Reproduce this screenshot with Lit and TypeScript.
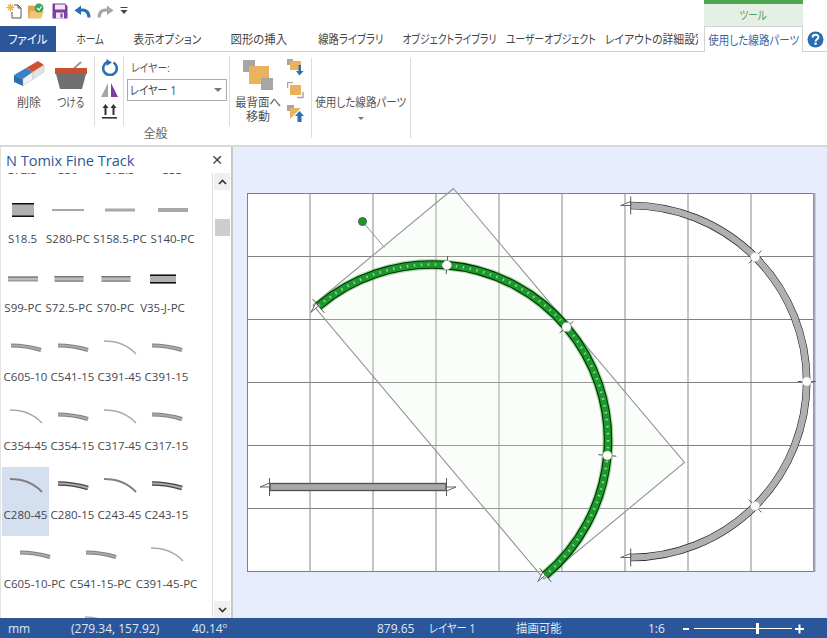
import { LitElement, html, css, svg } from "lit";
import { customElement } from "lit/decorators.js";

type Item = { label: string; width: number; kind: string; w?: number; h?: number; dark?: number };

const c45 = (label: string, dark = 0): Item => ({ label, width: 47, kind: "c45", dark });
const c15 = (label: string, dark = 0): Item => ({ label, width: 47, kind: "c15", dark });

const ROWS: Item[][] = [
  [
    { label: "S72.5", width: 41, kind: "none" },
    { label: "S50", width: 50, kind: "none" },
    { label: "S72.5", width: 54, kind: "none" },
    { label: "S33", width: 51, kind: "none" },
  ],
  [
    { label: "S18.5", width: 41, kind: "wide", w: 22, h: 14 },
    { label: "S280-PC", width: 50, kind: "thin", w: 32, h: 2 },
    { label: "S158.5-PC", width: 54, kind: "thin", w: 30, h: 3 },
    { label: "S140-PC", width: 51, kind: "thin", w: 30, h: 4 },
  ],
  [
    { label: "S99-PC", width: 42, kind: "double", w: 30, h: 5 },
    { label: "S72.5-PC", width: 50, kind: "double", w: 29, h: 6 },
    { label: "S70-PC", width: 43, kind: "double", w: 29, h: 6 },
    { label: "V35-J-PC", width: 51, kind: "wide", w: 26, h: 9 },
  ],
  [c15("C605-10"), c15("C541-15"), c45("C391-45"), c15("C391-15")],
  [c45("C354-45"), c15("C354-15"), c45("C317-45"), c15("C317-15")],
  [c45("C280-45", 1), c15("C280-15", 1), c45("C243-45", 1), c15("C243-15", 1)],
  [
    { label: "C605-10-PC", width: 65, kind: "c15", dark: 0 },
    { label: "C541-15-PC", width: 67, kind: "c15", dark: 0 },
    { label: "C391-45-PC", width: 65, kind: "c45", dark: 0 },
  ],
  [
    { label: "", width: 65, kind: "none" },
    { label: "", width: 67, kind: "c45", dark: 0 },
    { label: "", width: 65, kind: "none" },
  ],
];

const pt = (cx: number, cy: number, r: number, deg: number) => {
  const a = (deg * Math.PI) / 180;
  return [cx + r * Math.sin(a), cy - r * Math.cos(a)];
};

const arcD = (cx: number, cy: number, r: number, a0: number, a1: number) => {
  const [x0, y0] = pt(cx, cy, r, a0);
  const [x1, y1] = pt(cx, cy, r, a1);
  return `M${x0.toFixed(2)} ${y0.toFixed(2)}A${r} ${r} 0 ${a1 - a0 > 180 ? 1 : 0} 1 ${x1.toFixed(2)} ${y1.toFixed(2)}`;
};

const radial = (cx: number, cy: number, r: number, deg: number, len: number) => {
  const [x0, y0] = pt(cx, cy, r - len, deg);
  const [x1, y1] = pt(cx, cy, r + len, deg);
  return svg`<line class="tick" x1=${x0} y1=${y0} x2=${x1} y2=${y1}></line>`;
};

const endMark = (cx: number, cy: number, r: number, deg: number, dir: number) => {
  const [x, y] = pt(cx, cy, r, deg);
  const a = (deg * Math.PI) / 180;
  const tx = Math.cos(a) * dir;
  const ty = Math.sin(a) * dir;
  const nx = Math.sin(a);
  const ny = -Math.cos(a);
  const o = dir < 0 ? 1 : -1;
  const tipX = x + tx * 10;
  const tipY = y + ty * 10;
  const sx = x + nx * 4 * o;
  const sy = y + ny * 4 * o;
  return svg`<polygon class="mark" points="${x},${y} ${tipX},${tipY} ${sx},${sy}"></polygon>${radial(cx, cy, r, deg, 9)}`;
};

const node = (cx: number, cy: number, r: number, deg: number) => {
  const [x, y] = pt(cx, cy, r, deg);
  return svg`${radial(cx, cy, r, deg, 9)}<circle class="node" cx=${x} cy=${y} r="4.5"></circle>`;
};

@customElement("app-root")
export class AppRoot extends LitElement {
  static styles = css`
    :host {
      display: flex;
      flex-direction: column;
      width: 827px;
      height: 638px;
      overflow: hidden;
      background: #fff;
      font-family: "Open Sans", "Noto Sans CJK JP", sans-serif;
      font-feature-settings: "palt";
      font-size: 11.5px;
      color: #444;
    }
    svg { display: block; }
    .c { display: inline-block; white-space: nowrap; flex: none; }
    .s80 { transform: scaleX(0.8); }
    .s82 { transform: scaleX(0.82); }
    .s86 { transform: scaleX(0.86); }
    .s88 { transform: scaleX(0.88); }
    .s90 { transform: scaleX(0.9); }
    .s95 { transform: scaleX(0.95); }
    .l { transform-origin: left center; }
    .top { display: flex; height: 26px; align-items: flex-start; }
    .qa { display: flex; align-items: center; height: 22px; padding-left: 6px; gap: 6px; }
    .qa .save { margin-left: 1px; }
    .tool {
      margin-left: auto; margin-right: 24px; width: 99px; height: 26px; box-sizing: border-box;
      border-top: 4px solid #4ea64e; background: #e3f0e3; color: #5a9a5a;
      display: flex; align-items: center; justify-content: center; font-size: 12px;
    }
    .tabs {
      display: grid;
      grid-template-columns: 56px 69px 84px 100px 83px 114px 89px 109px 99px 24px;
      height: 26px; box-sizing: border-box; border-bottom: 1px solid #d2d2d2;
    }
    .tab { display: flex; align-items: center; justify-content: center; white-space: nowrap; font-size: 12px; color: #444; min-width: 0; }
    .tab.file { background: #2b579a; color: #fff; }
    .tab.clip { justify-content: flex-start; padding-left: 10px; margin-right: 6px; overflow: hidden; }
    .tab.on {
      background: #fff; color: #3a63a0; border: 1px solid #d2d2d2; border-bottom: 0; height: 26px; box-sizing: border-box;
    }
    .tab.help { padding-left: 1px; }
    .ribbon { display: flex; height: 95px; box-sizing: border-box; border-bottom: 2px solid #d8d8d8; }
    .group { display: flex; flex-direction: column; margin-top: 4px; }
    .g1 { width: 311px; }
    .g2 { width: 98px; }
    .gbody { display: flex; height: 70px; }
    .g1 .gbody { padding-left: 8px; }
    .glabel { text-align: center; line-height: 14px; margin-top: 1px; color: #666; font-size: 12px; }
    .sep { width: 1px; height: 70px; background: #dcdcdc; flex: none; }
    .gsep { width: 1px; height: 80px; margin-top: 6px; background: #dcdcdc; flex: none; }
    .big {
      width: 42px; display: flex; flex-direction: column; align-items: center; padding-top: 4px; box-sizing: border-box;
      font-size: 12px; line-height: 14px; color: #555; text-align: center; white-space: nowrap; flex: none;
    }
    .big .ic { height: 32px; margin-bottom: 4px; }
    .gap2 { width: 2px; flex: none; }
    .smallcol { width: 28px; display: flex; flex-direction: column; align-items: center; padding-top: 3px; gap: 7px; box-sizing: border-box; flex: none; }
    .layer { width: 105px; padding-left: 3px; box-sizing: border-box; flex: none; }
    .layer .cap { line-height: 14px; margin: 5px 0 4px 4px; font-size: 11.5px; color: #555; }
    .combo {
      width: 100px; height: 22px; box-sizing: border-box; border: 1px solid #ababab; display: flex; align-items: center;
      padding: 0 4px 0 2px; justify-content: space-between; font-size: 12px; color: #444;
    }
    .tri { width: 0; height: 0; border-left: 4px solid transparent; border-right: 4px solid transparent; border-top: 4px solid #777; }
    .tri.mini { border-left-width: 3px; border-right-width: 3px; border-top-width: 3px; margin-top: 7px; }
    .big.front { width: 56px; }
    .smallcol.order { width: 18px; margin-right: 7px; gap: 6px; }
    .big.parts { width: 98px; padding-top: 40px; }
    .main { display: flex; height: 471px; }
    .panel { width: 233px; height: 471px; flex: none; box-sizing: border-box; border-left: 1px solid #e2e2e2; border-right: 2px solid #c8c8c8; display: flex; flex-direction: column; background: #fff; }
    .phead { height: 26px; flex: none; display: flex; align-items: center; justify-content: space-between; padding: 0 8px 0 5px; }
    .ptitle { font-size: 14.5px; color: #2b579a; white-space: nowrap; }
    .px { font-size: 14px; color: #444; line-height: 1; font-family: "DejaVu Sans", sans-serif; }
    .pbody { flex: 1; display: flex; min-height: 0; }
    .list { width: 211px; flex: none; overflow: hidden; padding-left: 1px; box-sizing: border-box; }
    .rows { margin-top: -51px; }
    .row { display: flex; height: 69px; }
    .cell { height: 69px; display: flex; flex-direction: column; align-items: center; flex: none; box-sizing: border-box; }
    .cell.sel { background: #d4dff0; }
    .cell svg { flex: none; }
    .lab { margin-top: 2px; line-height: 16px; white-space: nowrap; color: #44474f; font-size: 11.5px; }
    .sb { width: 18px; flex: none; border-left: 1px solid #dedede; box-sizing: content-box; display: flex; flex-direction: column; align-items: center; }
    .sbtn { width: 16px; height: 17px; background: #f0f0f0; display: flex; align-items: center; justify-content: center; flex: none; }
    .thumb { width: 15px; height: 17px; background: #cdcdcd; margin-top: 29px; flex: none; }
    .sbfill { flex: 1; }
    .canvas { flex: 1; background: #e8edfd; min-width: 0; }
    .status {
      height: 20px; background: #2b579a; color: #dfe7f3; display: grid; align-items: center; flex: none; font-size: 12px;
      grid-template-columns: 71px 121px 185px 52px 87px 132px 35px 144px;
    }
    .status > span { white-space: nowrap; }
    .status .mm { padding-left: 8px; }
    sup { font-size: 8px; line-height: 0; }

    .grid-v { stroke: #c4c4c4; stroke-width: 2; }
    .grid-h { stroke: #808080; stroke-width: 1; }
    .edge { fill: none; stroke: #808080; stroke-width: 1; }
    .bbox { fill: rgba(232, 244, 232, 0.22); stroke: #8f958f; stroke-width: 1.1; }
    .tick { stroke: #555; stroke-width: 1; }
    .mark { fill: #fff; stroke: #666; stroke-width: 1; }
    .node { fill: #fff; stroke: #bbb; stroke-width: 0.5; }
    .halo { fill: none; stroke: #5cb85c; stroke-opacity: 0.5; stroke-width: 11; }
    .gout { fill: none; stroke: #002f00; stroke-width: 8.6; }
    .gin { fill: none; stroke: #1a9a2a; stroke-width: 6.4; }
    .gdash { fill: none; stroke: #a9c6a9; stroke-width: 2.6; stroke-dasharray: 1.5 5.5; }
    .tout { fill: none; stroke: #222; stroke-width: 7.6; }
    .tin { fill: none; stroke: #b0b0b0; stroke-width: 6.4; }
    .rail { fill: #a9a9a9; stroke: #555; stroke-width: 1.4; }
    .hline { stroke: #8f958f; stroke-width: 1; }
    .handle { fill: #1a9a2a; stroke: #555; stroke-width: 1; }
    .zoomsvg { display: block; }
  `;

  private itemIcon(it: Item) {
    let body: unknown = null;
    if (it.kind === "wide") {
      const w = it.w!, h = it.h!, x = 22 - w / 2, y = 19 - h / 2;
      body = svg`<rect x=${x} y=${y} width=${w} height=${h} fill="#b0b0b0"></rect>
        <rect x=${x} y=${y} width=${w} height="1.5" fill="#111"></rect>
        <rect x=${x} y=${y + h - 1.5} width=${w} height="1.5" fill="#111"></rect>`;
    } else if (it.kind === "thin") {
      const w = it.w!, h = it.h!;
      body = svg`<rect x=${22 - w / 2} y=${19 - h / 2} width=${w} height=${h} fill="#a8a8a8"></rect>`;
    } else if (it.kind === "double") {
      const w = it.w!, h = it.h!, x = 22 - w / 2, y = 19 - h / 2;
      body = svg`<rect x=${x} y=${y} width=${w} height=${h} fill="#9a9a9a"></rect>
        <rect x=${x} y=${19 - 0.5} width=${w} height="1" fill="#dcdcdc"></rect>
        <rect x=${x} y=${y} width=${w} height="1" fill="#777"></rect>`;
    } else if (it.kind === "c45") {
      body = svg`<path d="M6 12Q26 12 38 25" fill="none" stroke=${it.dark ? "#808080" : "#aaa"} stroke-width=${it.dark ? 2 : 1.5}></path>`;
    } else if (it.kind === "c15") {
      body = svg`<path d="M7 16.5Q22 16.5 37 21" fill="none" stroke=${it.dark ? "#444" : "#808080"} stroke-width=${it.dark ? 4.6 : 4}></path>
        <path d="M7 16.5Q22 16.5 37 21" fill="none" stroke="#aaa" stroke-width="2.2"></path>`;
    }
    return html`<svg width="44" height="38" viewBox="0 0 44 38">${body}</svg>`;
  }

  private canvasSvg() {
    const xs = [310, 373, 436, 499, 562, 625, 688, 751];
    const ys = [256, 319, 382, 445, 508];
    const gc = [432, 440.5, 176] as const;
    const ga = [-40.14, 4.86, 49.86, 94.86, 139.86];
    const tc = [630.7, 381.5, 176] as const;
    const d1 = arcD(gc[0], gc[1], gc[2], ga[0], ga[4]);
    const d2 = arcD(tc[0], tc[1], tc[2], 0, 180);
    return html`<svg width="594" height="471" viewBox="233 147 594 471">
      <rect x="247" y="193" width="567" height="378" fill="#fff"></rect>
      ${xs.map((x) => svg`<line class="grid-v" x1=${x} y1="193" x2=${x} y2="571"></line>`)}
      ${ys.map((y) => svg`<line class="grid-h" x1="247" y1=${y + 0.5} x2="814" y2=${y + 0.5}></line>`)}
      <rect class="edge" x="247.5" y="193.5" width="566" height="378"></rect>
      <line x1="814.5" y1="193" x2="814.5" y2="572" stroke="#a8a8b8" stroke-width="2"></line>
      <polygon class="bbox" points="453.5,188.5 684.5,462.5 544,579 313,305"></polygon>
      <line class="hline" x1="362.5" y1="221.5" x2="384.5" y2="247.5"></line>
      <circle class="handle" cx="362.5" cy="221.5" r="4"></circle>

      <rect class="rail" x="270" y="483.5" width="176" height="7"></rect>
      <line class="tick" x1="269.5" y1="478" x2="269.5" y2="496"></line>
      <line class="tick" x1="446.5" y1="478" x2="446.5" y2="496"></line>
      <polygon class="mark" points="269.5,483 260,487 269.5,487"></polygon>
      <polygon class="mark" points="446.5,487 456,487 446.5,491"></polygon>

      <path class="tout" d=${d2}></path>
      <path class="tin" d=${d2}></path>
      ${endMark(tc[0], tc[1], tc[2], 0, -1)}
      ${endMark(tc[0], tc[1], tc[2], 180, 1)}
      ${[45, 90, 135].map((a) => node(tc[0], tc[1], tc[2], a))}

      <path class="halo" d=${d1}></path>
      <path class="gout" d=${d1}></path>
      <path class="gin" d=${d1}></path>
      <path class="gdash" d=${d1}></path>
      ${endMark(gc[0], gc[1], gc[2], ga[0], -1)}
      ${endMark(gc[0], gc[1], gc[2], ga[4], 1)}
      ${ga.slice(1, 4).map((a) => node(gc[0], gc[1], gc[2], a))}
    </svg>`;
  }

  render() {
    return html`
      <div class="top">
        <div class="qa">
          <svg width="16" height="16" viewBox="0 0 16 16">
            <path d="M8 2H12L15 5V15H6V9" fill="#fff" stroke="#555" stroke-width="1"></path>
            <path d="M12 2V5H15" fill="none" stroke="#555"></path>
            <path d="M4.5 0.5V8.5M0.5 4.5H8.5M1.8 1.8L7.2 7.2M7.2 1.8L1.8 7.2" stroke="#e8a33d" stroke-width="1.2"></path>
            <circle cx="4.5" cy="4.5" r="2" fill="#f0b840"></circle>
          </svg>
          <svg width="17" height="16" viewBox="0 0 17 16">
            <path d="M0.5 3H6L7.5 5H13V15H0.5Z" fill="#e0a84f" stroke="#c98f35" stroke-width="0.6"></path>
            <path d="M2.5 8H16L13 15H0.5Z" fill="#f2c671"></path>
            <circle cx="11" cy="5" r="4.5" fill="#3fa45a"></circle>
            <path d="M9 5L11 7L13.5 3.5" fill="none" stroke="#fff" stroke-width="1.2"></path>
          </svg>
          <svg class="save" width="16" height="16" viewBox="0 0 16 16">
            <path d="M0.5 0.5H13L15.5 3V15.5H0.5Z" fill="#7a3fa0"></path>
            <rect x="3" y="1.5" width="10" height="5" fill="#efe6f4"></rect>
            <rect x="4" y="9.5" width="8" height="6" fill="#efe6f4"></rect>
            <rect x="8.5" y="10.5" width="2" height="4" fill="#7a3fa0"></rect>
          </svg>
          <svg width="17" height="14" viewBox="0 0 17 14">
            <path d="M15 13.5C15 7 10 4.5 4.5 7" fill="none" stroke="#2a6db0" stroke-width="3"></path>
            <path d="M0.5 6.5L7 1.5V11Z" fill="#2a6db0"></path>
          </svg>
          <svg width="17" height="14" viewBox="0 0 17 14">
            <path d="M2 13.5C2 7 7 4.5 12.5 7" fill="none" stroke="#a6a6a6" stroke-width="3"></path>
            <path d="M16.5 6.5L10 1.5V11Z" fill="#a6a6a6"></path>
          </svg>
          <svg width="8" height="8" viewBox="0 0 8 8">
            <rect x="0.5" y="0" width="7" height="1" fill="#444"></rect>
            <path d="M0.5 3H7.5L4 7Z" fill="#444"></path>
          </svg>
        </div>
        <div class="tool"><span class="c s80">ツール</span></div>
      </div>

      <div class="tabs">
        <div class="tab file"><span class="c s95">ファイル</span></div>
        <div class="tab"><span class="c s80">ホーム</span></div>
        <div class="tab"><span class="c s88">表示オプション</span></div>
        <div class="tab"><span class="c s95">図形の挿入</span></div>
        <div class="tab"><span class="c s86">線路ライブラリ</span></div>
        <div class="tab"><span class="c s82">オブジェクトライブラリ</span></div>
        <div class="tab"><span class="c s82">ユーザーオブジェクト</span></div>
        <div class="tab clip"><span class="c s90 l">レイアウトの詳細設定</span></div>
        <div class="tab on"><span class="c s88">使用した線路パーツ</span></div>
        <div class="tab help">
          <svg width="17" height="17" viewBox="0 0 17 17">
            <circle cx="8.5" cy="8.5" r="8" fill="#2b6cb0"></circle>
            <path d="M5.6 6.4C5.6 2.8 11.4 2.8 11.4 6.2C11.4 8.2 8.6 8.2 8.6 10.4" fill="none" stroke="#fff" stroke-width="2"></path>
            <rect x="7.5" y="11.6" width="2.2" height="2.2" fill="#fff"></rect>
          </svg>
        </div>
      </div>

      <div class="ribbon">
        <div class="group g1">
          <div class="gbody">
            <div class="big">
              <div class="ic">
                <svg width="32" height="28" viewBox="0 0 32 28">
                  <path d="M1 15L10 19V26L1 22Z" fill="#2a6db0"></path>
                  <path d="M1 15L13 8L20 12L10 19Z" fill="#3b7fc4"></path>
                  <path d="M13 8L25 1L31 5L20 12Z" fill="#cf4f33"></path>
                  <path d="M10 19L20 12V19L10 26Z" fill="#f2f2f2" stroke="#bbb" stroke-width="0.5"></path>
                  <path d="M20 12L31 5V12L20 19Z" fill="#e3e3e3" stroke="#bbb" stroke-width="0.5"></path>
                </svg>
              </div>
              削除
            </div>
            <div class="big">
              <div class="ic">
                <svg width="32" height="30" viewBox="0 0 32 30">
                  <path d="M15 12L26 2" stroke="#999" stroke-width="2"></path>
                  <rect x="0" y="8" width="32" height="6" fill="#c94f33"></rect>
                  <path d="M1 14H31L27 29H5Z" fill="#6f6f6f"></path>
                </svg>
              </div>
              <span class="c s80">つける</span>
            </div>
            <div class="gap2"></div>
            <div class="sep"></div>
            <div class="smallcol">
              <svg width="18" height="17" viewBox="0 0 18 17">
                <path d="M7 3.2A6.8 6.8 0 1 0 13.5 3.5" fill="none" stroke="#2f6fb0" stroke-width="2.6"></path>
                <path d="M7.5 0V7L13 3.5Z" fill="#2f6fb0" transform="translate(-1 0)"></path>
              </svg>
              <svg width="17" height="14" viewBox="0 0 17 14">
                <path d="M7 0V14H0Z" fill="#a6a6a6"></path>
                <path d="M10 0V14H17Z" fill="#7a3fa0"></path>
              </svg>
              <svg width="15" height="15" viewBox="0 0 15 15">
                <path d="M3.5 0L6.5 4H4.5V11H2.5V4H0.5Z" fill="#333"></path>
                <path d="M11.5 0L14.5 4H12.5V11H10.5V4H8.5Z" fill="#333"></path>
                <rect x="0" y="13" width="15" height="1.6" fill="#333"></rect>
              </svg>
            </div>
            <div class="sep"></div>
            <div class="layer">
              <div class="cap"><span class="c s86 l">レイヤー:</span></div>
              <div class="combo"><span class="c s86 l">レイヤー 1</span><span class="tri"></span></div>
            </div>
            <div class="sep"></div>
            <div class="big front">
              <div class="ic">
                <svg width="30" height="30" viewBox="0 0 30 30">
                  <rect x="0" y="0" width="12" height="12" fill="#a6a6a6"></rect>
                  <rect x="6" y="6" width="20" height="18" fill="#e8b25f"></rect>
                  <rect x="18" y="18" width="12" height="12" fill="#a6a6a6"></rect>
                </svg>
              </div>
              <span class="c s95">最背面へ</span>
              <span>移動</span>
            </div>
            <div class="smallcol order">
              <svg width="17" height="17" viewBox="0 0 17 17">
                <rect x="0" y="0" width="6" height="6" fill="#a6a6a6"></rect>
                <rect x="3" y="2" width="11" height="9" fill="#e8b25f"></rect>
                <path d="M11.5 6V12H9L12.5 16.5L16.5 12H14V6Z" fill="#2f6fb0"></path>
              </svg>
              <svg width="17" height="17" viewBox="0 0 17 17">
                <path d="M0.5 6V0.5H6" fill="none" stroke="#a6a6a6" stroke-width="1.5"></path>
                <rect x="3" y="3" width="11" height="10" fill="#e8b25f"></rect>
                <path d="M16 10V15.5H10" fill="none" stroke="#a6a6a6" stroke-width="1.5"></path>
              </svg>
              <svg width="17" height="18" viewBox="0 0 17 18">
                <rect x="0" y="0" width="7" height="6" fill="#a6a6a6"></rect>
                <path d="M3 3H14L3 14Z" fill="#e8b25f"></path>
                <path d="M12.5 6L8 11H10.5V17H14.5V11H17Z" fill="#2f6fb0"></path>
              </svg>
            </div>
          </div>
          <div class="glabel">全般</div>
        </div>
        <div class="gsep"></div>
        <div class="group g2">
          <div class="gbody">
            <div class="big parts">
              <span class="c s88">使用した線路パーツ</span>
              <span class="tri mini"></span>
            </div>
          </div>
        </div>
        <div class="gsep"></div>
      </div>

      <div class="main">
        <div class="panel">
          <div class="phead">
            <span class="ptitle">N Tomix Fine Track</span>
            <span class="px">✕</span>
          </div>
          <div class="pbody">
            <div class="list">
              <div class="rows">
                ${ROWS.map(
                  (row) => html`<div class="row">
                    ${row.map(
                      (it) => html`<div class="cell ${it.label === "C280-45" ? "sel" : ""}" style="width:${it.width}px">
                        ${this.itemIcon(it)}
                        <span class="lab">${it.label}</span>
                      </div>`
                    )}
                  </div>`
                )}
              </div>
            </div>
            <div class="sb">
              <div class="sbtn">
                <svg width="9" height="6" viewBox="0 0 9 6"><path d="M1 5L4.5 1.5L8 5" fill="none" stroke="#333" stroke-width="1.6"></path></svg>
              </div>
              <div class="thumb"></div>
              <div class="sbfill"></div>
              <div class="sbtn">
                <svg width="9" height="6" viewBox="0 0 9 6"><path d="M1 1L4.5 4.5L8 1" fill="none" stroke="#333" stroke-width="1.6"></path></svg>
              </div>
            </div>
          </div>
        </div>
        <div class="canvas">${this.canvasSvg()}</div>
      </div>

      <div class="status">
        <span class="mm">mm</span>
        <span>(279.34, 157.92)</span>
        <span>40.14<sup>o</sup></span>
        <span>879.65</span>
        <span><span class="c s86 l">レイヤー 1</span></span>
        <span><span class="c s95 l">描画可能</span></span>
        <span>1:6</span>
        <svg class="zoomsvg" width="144" height="20" viewBox="683 618 144 20">
          <rect x="683" y="628" width="6" height="2" fill="#fff"></rect>
          <rect x="694" y="628" width="98" height="1" fill="#fff"></rect>
          <rect x="756" y="623" width="3" height="11" fill="#fff"></rect>
          <rect x="795" y="628" width="9" height="2" fill="#fff"></rect>
          <rect x="798.5" y="624.5" width="2" height="9" fill="#fff"></rect>
        </svg>
      </div>
    `;
  }
}
